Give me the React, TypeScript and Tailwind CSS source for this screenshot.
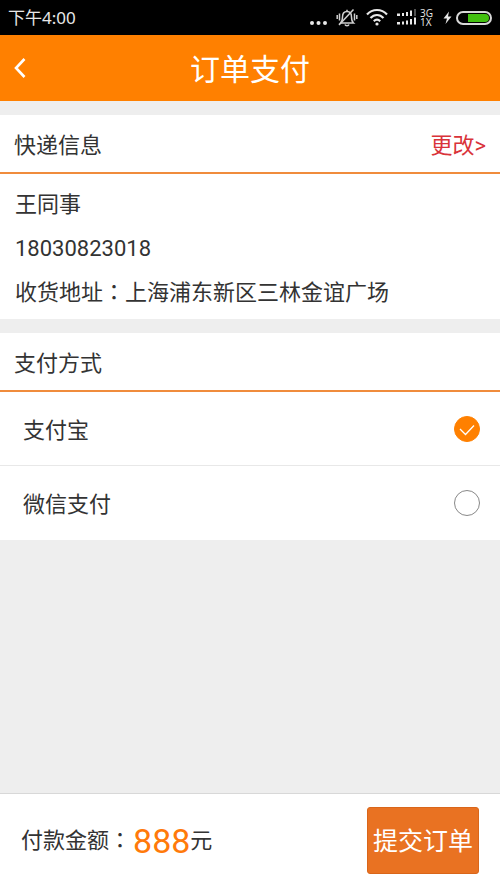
import { useState } from "react";

const sans = "font-[Roboto,'Noto_Sans_CJK_SC',sans-serif]";

const methods = [
  { id: "alipay", label: "支付宝" },
  { id: "wechat", label: "微信支付" },
];

// full-width colon, centred in its cell
function Colon() {
  return <span className="font-['Noto_Sans_CJK_TC',sans-serif] leading-none">：</span>;
}

function StatusBar() {
  return (
    <div className="flex h-[35px] items-center justify-between bg-black px-2 text-[#e8e8e8]">
      <span className="font-['Noto_Sans','Noto_Sans_CJK_SC',sans-serif] text-[17px] leading-6">
        下午4:00
      </span>
      <div className="flex items-center">
        <svg className="mr-2 h-5 w-[18px]" viewBox="0 0 18 20" fill="currentColor">
          <circle cx="2" cy="15" r="2" />
          <circle cx="8.500" cy="15" r="2" />
          <circle cx="15" cy="15" r="2" />
        </svg>
        <svg
          className="mr-2 h-5 w-[22px]"
          viewBox="0 0 22 20"
          fill="none"
          stroke="#d0d0d0"
          strokeWidth="1.500"
        >
          <path d="M4.500 15c1.500-1.300 2-2.500 2-6C6.500 5.500 8 3.500 11 3.500S15.500 5.500 15.500 9c0 3.500.5 4.700 2 6h-13Z" />
          <path d="M9 16.500c.5 1.600 3.500 1.600 4 0M11 1.800v1.700M3.500 5.500v7M1.200 7v4M18.500 5.500v7M20.800 7v4" />
          <path d="M3 17 17.500 1.500" />
        </svg>
        <svg
          className="mr-2 h-5 w-[22px]"
          viewBox="0 0 22 20"
          fill="none"
          stroke="currentColor"
          strokeWidth="2.200"
        >
          <path d="M1 6.500c5.500-6 14.500-6 20 0M4.500 10c3.700-4 9.300-4 13 0M7.800 13.200c2-2 4.400-2 6.400 0" />
          <circle cx="11" cy="16" r="1.600" fill="currentColor" stroke="none" />
        </svg>
        <svg className="mr-[3px] h-5 w-[21px]" viewBox="0 0 21 20" fill="currentColor">
          <path d="M1 5.500h3v2.500H1zM6 5h2v3H6zM10 4h2v4h-2zM14 2.500h2V8h-2z" />
          <path d="M18 1h2v7h-2z" opacity=".35" />
          <path d="M1 14h3v2.500H1zM6 13.500h2v3H6zM10 12.500h2v4h-2zM14 11h2v5.500h-2zM18 9.500h2v7h-2z" />
        </svg>
        <span className="mr-2 w-[15px] font-['Open_Sans',sans-serif] text-[10px] leading-[9px]">
          3G
          <br />
          1X
        </span>
        <svg className="mr-1 h-5 w-[9px]" viewBox="0 0 9 20" fill="currentColor">
          <path d="M6 3.500.5 10.500H4L2.500 16 8.500 8.500H5z" />
        </svg>
        <span className="flex h-[14px] w-9 justify-end rounded-full border-2 border-[#d8d8d8] p-px">
          <span className="w-[21px] rounded-r-full bg-[#43c010]" />
        </span>
      </div>
    </div>
  );
}

function PaymentOption({
  label,
  checked,
  onChange,
}: {
  label: string;
  checked: boolean;
  onChange: () => void;
}) {
  return (
    <label className="flex h-[74px] cursor-pointer items-center justify-between pl-[23px] pr-5">
      <span className="pt-1">{label}</span>
      <span className="relative flex h-[26px] w-[26px]">
        <input
          type="radio"
          name="payment"
          className="h-full w-full appearance-none rounded-full border border-[#888] bg-white checked:border-[#ff8000] checked:bg-[#ff8000]"
          checked={checked}
          onChange={onChange}
        />
        {checked && (
          <svg
            className="pointer-events-none absolute inset-0"
            viewBox="0 0 26 26"
            fill="none"
            stroke="white"
            strokeWidth="1.300"
          >
            <path d="m6 13 5.500 5.500L20 9.500" />
          </svg>
        )}
      </span>
    </label>
  );
}

export default function App() {
  const [method, setMethod] = useState("alipay");

  return (
    <div className={`flex min-h-screen flex-col bg-[#eee] text-[22px] leading-8 text-[#333] ${sans}`}>
      <StatusBar />
      <header className="grid h-[66px] grid-cols-[1fr_auto_1fr] items-center bg-[#ff8000] text-white">
        <button type="button" aria-label="返回" className="flex h-full w-12 items-center pl-3">
          <svg
            className="h-5 w-4"
            viewBox="0 0 16 20"
            fill="none"
            stroke="currentColor"
            strokeWidth="2.600"
          >
            <path d="M12.500 1 4 10l8.500 9" />
          </svg>
        </button>
        <h1 className="pt-1 text-[30px] leading-10">订单支付</h1>
      </header>

      <section className="mt-[14px] bg-white">
        <div className="flex h-[59px] items-center justify-between border-b-2 border-[#f08c3c] px-[14px] pt-1">
          <h2>快递信息</h2>
          <a href="#address" className="text-[#d9333a]">
            更改&gt;
          </a>
        </div>
        <div className="flex flex-col gap-3 px-[15px] pb-[10px] pt-[15px]">
          <p>王同事</p>
          <p>18030823018</p>
          <p>
            收货地址
            <Colon />
            上海浦东新区三林金谊广场
          </p>
        </div>
      </section>

      <section className="mt-[14px] bg-white">
        <div className="flex h-[59px] items-center border-b-2 border-[#f08c3c] px-[14px] pt-1">
          <h2>支付方式</h2>
        </div>
        <div className="divide-y divide-[#e8e8e8]">
          {methods.map((m) => (
            <PaymentOption
              key={m.id}
              label={m.label}
              checked={method === m.id}
              onChange={() => setMethod(m.id)}
            />
          ))}
        </div>
      </section>

      <footer className="mt-auto flex h-[94px] items-center justify-between border-t border-[#d8d8d8] bg-white px-[21px]">
        <p className="flex items-center">
          <span>
            付款金额
            <Colon />
          </span>
          <span className="ml-0.5 text-[34px] text-[#ff7a0a]">888</span>
          <span>元</span>
        </p>
        <button
          type="button"
          className="h-[67px] rounded-[3px] border border-[#d9661a] bg-[#e97222] px-[5px] pt-0.5 text-[25px] text-white"
        >
          提交订单
        </button>
      </footer>
    </div>
  );
}
